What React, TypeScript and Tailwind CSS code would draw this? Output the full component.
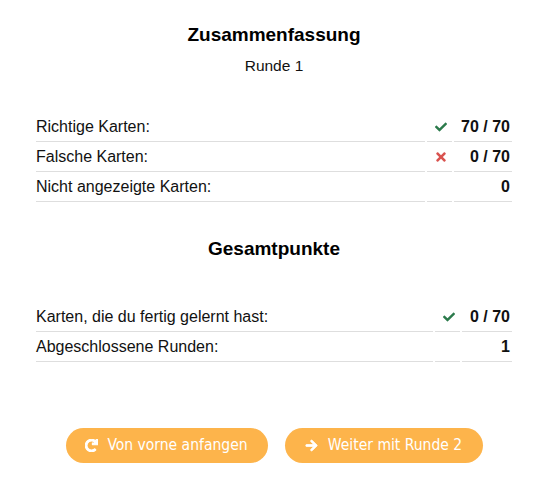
import { FaCheck, FaTimes, FaRedo, FaArrowRight } from "react-icons/fa";

type Row = { label: string; icon?: "check" | "times"; value: string };

const runde: Row[] = [
    { label: "Richtige Karten:", icon: "check", value: "70 / 70" },
    { label: "Falsche Karten:", icon: "times", value: "0 / 70" },
    { label: "Nicht angezeigte Karten:", value: "0" },
];

const gesamt: Row[] = [
    { label: "Karten, die du fertig gelernt hast:", icon: "check", value: "0 / 70" },
    { label: "Abgeschlossene Runden:", value: "1" },
];

function StatTable({ rows, cols }: { rows: Row[]; cols: string }) {
    return (
        <div className={`grid ${cols} gap-x-[2px]`}>
            {rows.map((r) => (
                <div key={r.label} className="contents">
                    <div className="h-[30px] leading-[29px] border-b border-[#dedede] text-[16px] text-[#111]">
                        {r.label}
                    </div>
                    <div className="h-[30px] border-b border-[#dedede] flex items-center justify-center pl-[3px]">
                        {r.icon === "check" && <FaCheck className="text-[#2b7a4b]" size={12} />}
                        {r.icon === "times" && <FaTimes className="text-[#d9534f]" size={14} />}
                    </div>
                    <div className="h-[30px] leading-[29px] border-b border-[#dedede] text-right pr-[2px] text-[16px] font-bold text-[#111]">
                        {r.value}
                    </div>
                </div>
            ))}
        </div>
    );
}

export default function App() {
    return (
        <div className="w-[548px] bg-white font-['Liberation_Sans',Arial,sans-serif] text-[#111]">
            <div className="w-[476px] mx-auto pt-[24px] pb-[22px]">
                <h3 className="text-[19px] leading-[22px] font-bold text-center text-black">Zusammenfassung</h3>
                <p className="text-[15.5px] leading-[18px] text-center mt-[11px]">Runde 1</p>

                <div className="mt-[37px]">
                    <StatTable rows={runde} cols="grid-cols-[1fr_25px_58px]" />
                </div>

                <h3 className="text-[19px] leading-[22px] font-bold text-center text-black mt-[36px]">Gesamtpunkte</h3>

                <div className="mt-[42px]">
                    <StatTable rows={gesamt} cols="grid-cols-[1fr_25px_50px]" />
                </div>

                <div className="flex justify-center gap-[17px] mt-[66px] font-['DejaVu_Sans_Condensed','DejaVu_Sans',sans-serif]">
                    <button className="w-[202px] h-[35px] rounded-full bg-[#fdb44b] text-white text-[15.5px] flex items-center justify-center gap-[9px]">
                        <FaRedo size={13} stroke="currentColor" strokeWidth={40} />
                        <span>Von vorne anfangen</span>
                    </button>
                    <button className="w-[198px] h-[35px] rounded-full bg-[#fdb44b] text-white text-[15.5px] flex items-center justify-center gap-[10px]">
                        <FaArrowRight size={13} stroke="currentColor" strokeWidth={30} />
                        <span>Weiter mit Runde 2</span>
                    </button>
                </div>
            </div>
        </div>
    );
}
